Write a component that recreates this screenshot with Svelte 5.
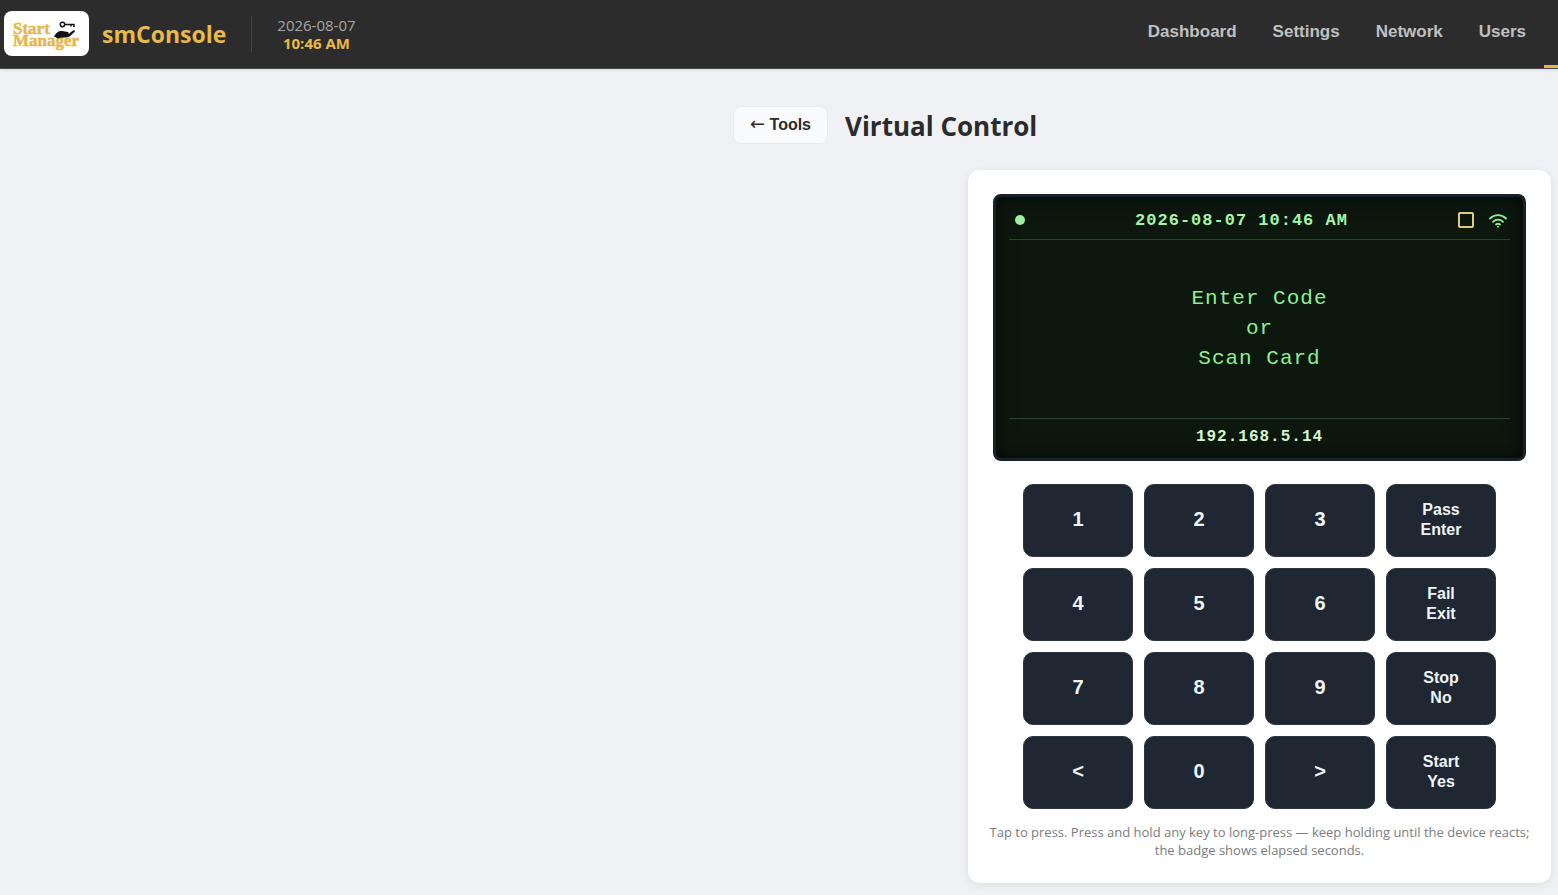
<script>
  let date = "2026-08-07";
  let time = "10:46 AM";
  let address = "192.168.5.14";
  let message = ["Enter Code", "or", "Scan Card"];

  const links = ["Dashboard", "Settings", "Network", "Users"];

  const keys = [
    ["1"], ["2"], ["3"], ["Pass", "Enter"],
    ["4"], ["5"], ["6"], ["Fail", "Exit"],
    ["7"], ["8"], ["9"], ["Stop", "No"],
    ["<"], ["0"], [">"], ["Start", "Yes"],
  ];
</script>

<header>
  <div class="brand">
    <svg class="logo" viewBox="0 0 85 45" role="img" aria-label="Start Manager">
      <rect width="85" height="45" rx="8" fill="#fff" />
      <g class="logo-text">
        <text x="9" y="23">Start</text>
        <text x="9" y="35">Manager</text>
      </g>
      <circle cx="58.500" cy="13.500" r="2.200" fill="none" stroke="#111" stroke-width="1.500" />
      <path d="M61 13.500H70V16M67 13.500V15.500" fill="none" stroke="#111" stroke-width="1.500" />
      <path d="M50 25.500C52 21.500 55 19.500 58 20L64 21C65 21.500 64.500 22.500 63.500 22.500H60L65 22.500L69.500 19.300C71 19 71.500 20 70.500 21L65.500 25.500C63 27 58 26 54 27.500Z" fill="#111" />
    </svg>
    <span class="name">smConsole</span>
    <div class="clock">
      <span>{date}</span>
      <b>{time}</b>
    </div>
  </div>
  <nav>
    {#each links as link}
      <a href="#{link.toLowerCase()}">{link}</a>
    {/each}
    <span class="active"></span>
  </nav>
</header>

<main>
  <div class="title">
    <button class="back" type="button"><span class="arrow">←</span> Tools</button>
    <h1>Virtual Control</h1>
  </div>

  <section class="card">
    <div class="screen">
      <div class="status">
        <span class="dot"></span>
        <span>{date} {time}</span>
        <span class="icons">
          <span class="square"></span>
          <svg width="18" height="16" viewBox="0 0 18 16" fill="none" stroke="#90ee90" stroke-width="1.8" stroke-linecap="round">
            <path d="M1 6.500C5.500 2 12.500 2 17 6.500" />
            <path d="M4 9.800C6.800 7 11.200 7 14 9.800" />
            <path d="M7 12.500C8 11.700 10 11.700 11 12.500" />
            <circle cx="9" cy="14.800" r="1" fill="#90ee90" stroke="none" />
          </svg>
        </span>
      </div>
      <div class="message">
        {#each message as line}
          <div>{line}</div>
        {/each}
      </div>
      <div class="address">{address}</div>
    </div>

    <div class="keypad">
      {#each keys as key}
        <button type="button" class:word={key.length > 1}>
          {#each key as line}
            <span>{line}</span>
          {/each}
        </button>
      {/each}
    </div>

    <p class="hint">
      Tap to press. Press and hold any key to long-press — keep holding until the device reacts; the badge shows elapsed seconds.
    </p>
  </section>
</main>

<style>
  :global(body) {
    margin: 0;
    background: #f0f1f5;
    color: #2b2b2b;
    font-family: "Open Sans", "Noto Sans", sans-serif;
  }
  header {
    display: flex;
    justify-content: space-between;
    box-sizing: border-box;
    height: 69px;
    background: #2c2c2c;
    border-bottom: 1px solid #4a4a4a;
    box-shadow: 0 1px 3px rgba(0, 0, 0, 0.12);
  }
  .brand {
    display: flex;
    align-items: center;
    padding: 0 0 1px 4px;
  }
  .logo {
    width: 85px;
    height: 45px;
  }
  .logo-text {
    font-family: "Liberation Serif", serif;
    font-size: 17px;
    font-weight: bold;
    fill: #e4b84a;
    stroke: #e4b84a;
    stroke-width: 0.5px;
  }
  .name {
    margin: 0 25px 0 13px;
    color: #e9b949;
    font-size: 23px;
    font-weight: bold;
  }
  .clock {
    display: flex;
    flex-direction: column;
    align-items: center;
    padding-left: 25px;
    border-left: 1px solid #444;
    color: #a6a6a6;
    font-size: 15px;
    line-height: 18px;
  }
  .clock b {
    color: #e9b949;
  }
  nav {
    display: flex;
  }
  nav a {
    padding: 0 18px;
    color: #c0c0c0;
    font-family: "Liberation Sans", Arial, sans-serif;
    font-size: 17px;
    font-weight: bold;
    line-height: 64px;
    text-decoration: none;
  }
  .active {
    width: 14px;
    border-bottom: 3px solid #e0b84e;
  }
  main {
    display: flex;
    flex-direction: column;
    max-width: 818px;
    margin: 35px 7px 12px auto;
  }
  .title {
    display: flex;
    align-items: center;
    gap: 17px;
    margin-bottom: 24px;
  }
  h1 {
    margin: 0;
    padding-top: 2px;
    font-size: 26px;
    line-height: 40px;
  }
  .back {
    height: 38px;
    padding: 0 16px;
    border: 1px solid #e9eaee;
    border-radius: 8px;
    background: #f9fafc;
    color: #2b2b2b;
    font: bold 16px "Liberation Sans", Arial, sans-serif;
  }
  .arrow {
    font-family: "DejaVu Sans", sans-serif;
    font-size: 18px;
    font-weight: normal;
    line-height: 16px;
  }
  .card {
    align-self: flex-end;
    box-sizing: border-box;
    width: 100%;
    max-width: 583px;
    padding: 24px 25px;
    border-radius: 12px;
    background: #fff;
    box-shadow: 0 2px 10px rgba(0, 0, 0, 0.08);
  }
  .screen {
    display: flex;
    flex-direction: column;
    box-sizing: border-box;
    min-height: 267px;
    padding: 0 13px;
    border: 3px solid #17202b;
    border-radius: 8px;
    background: #0c170e;
    box-shadow: inset 0 0 20px rgba(0, 0, 0, 0.6);
    color: #90ee90;
    font-family: "Courier New", "Liberation Mono", monospace;
    letter-spacing: 1px;
  }
  .status {
    display: flex;
    align-items: center;
    justify-content: space-between;
    height: 43px;
    padding: 4px 3px 0 6px;
    box-sizing: border-box;
    border-bottom: 1px solid #28452b;
    color: #a5f5a5;
    font-size: 17px;
    font-weight: bold;
  }
  .dot {
    width: 10px;
    height: 10px;
    border-radius: 50%;
    background: #a0eda0;
  }
  .icons {
    display: flex;
    align-items: center;
    gap: 15px;
  }
  .square {
    box-sizing: border-box;
    width: 16px;
    height: 16px;
    border: 2px solid #e2c987;
    border-radius: 2px;
  }
  .message {
    display: flex;
    flex: 1;
    flex-direction: column;
    justify-content: center;
    font-size: 21px;
    line-height: 30px;
    text-align: center;
  }
  .address {
    height: 40px;
    box-sizing: border-box;
    border-top: 1px solid #28452b;
    color: #d5f5c8;
    font-size: 16px;
    font-weight: bold;
    line-height: 36px;
    text-align: center;
  }
  .keypad {
    display: grid;
    grid-template-columns: repeat(4, 1fr);
    gap: 11px;
    margin: 23px 30px 14px;
  }
  .keypad button {
    display: flex;
    flex-direction: column;
    align-items: center;
    justify-content: center;
    height: 73px;
    padding: 0 0 2px;
    border: 1px solid #2c3744;
    border-radius: 10px;
    background: #1f2732;
    color: #f0f4f8;
    font: bold 20px "Liberation Sans", Arial, sans-serif;
  }
  .keypad .word {
    font-size: 16px;
    line-height: 20px;
  }
  .hint {
    margin: 0 -8px;
    color: #7c7c7c;
    font-size: 13px;
    line-height: 18px;
    text-align: center;
  }
</style>
